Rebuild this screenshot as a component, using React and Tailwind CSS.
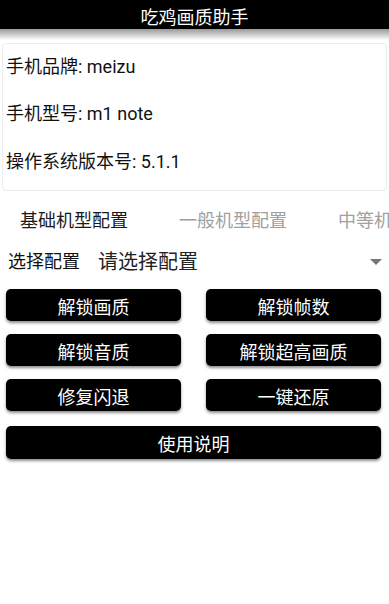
import React from "react";

const font = { fontFamily: 'Roboto, "Noto Sans CJK SC", sans-serif' };

function Btn({ children, className = "" }) {
  return (
    <div
      className={
        "h-[32px] rounded-[5px] bg-black text-white text-[18px] leading-none flex items-center justify-center pt-[5px] shadow-[0_2px_3px_rgba(0,0,0,0.45)] " +
        className
      }
    >
      {children}
    </div>
  );
}

export default function App() {
  return (
    <div className="w-[389px] h-[604px] bg-white overflow-hidden" style={font}>
      <div className="h-[29px] bg-black flex items-center justify-center text-white text-[18px] leading-none pt-[7px]">
        吃鸡画质助手
      </div>
      <div className="h-[11px] bg-gradient-to-b from-[#9a9a9a] to-white" />
      <div className="mt-[3px] mx-[2px] h-[148px] border border-[#ececec] rounded-[4px] pl-[3px] flex flex-col text-[18px] text-[#111] leading-none">
        <div className="h-[46px] flex items-center">手机品牌: meizu</div>
        <div className="h-[48px] flex items-center">手机型号: m1 note</div>
        <div className="h-[48px] flex items-center">操作系统版本号: 5.1.1</div>
      </div>
      <div className="h-[58px] flex items-center pl-[20px] gap-[51px] whitespace-nowrap overflow-hidden text-[18px] leading-none pt-[1px]">
        <span className="text-[#1a1a1a]">基础机型配置</span>
        <span className="text-[#a0a0a0]">一般机型配置</span>
        <span className="text-[#a0a0a0]">中等机型配置</span>
      </div>
      <div className="h-[26px] flex items-center pl-[8px] pr-[7px] leading-none">
        <span className="text-[18px] text-[#111]">选择配置</span>
        <span className="ml-[18px] text-[20px] text-[#222]">请选择配置</span>
        <span className="ml-auto w-0 h-0 border-l-[6.5px] border-r-[6.5px] border-t-[6px] border-l-transparent border-r-transparent border-t-[#777]" />
      </div>
      <div className="mt-[14px] pl-[6px] pr-[8px] flex flex-col">
        <div className="grid grid-cols-2 gap-x-[25px] gap-y-[13px]">
          <Btn>解锁画质</Btn>
          <Btn>解锁帧数</Btn>
          <Btn>解锁音质</Btn>
          <Btn>解锁超高画质</Btn>
          <Btn>修复闪退</Btn>
          <Btn>一键还原</Btn>
        </div>
        <Btn className="mt-[15px] h-[33px]">使用说明</Btn>
      </div>
    </div>
  );
}
